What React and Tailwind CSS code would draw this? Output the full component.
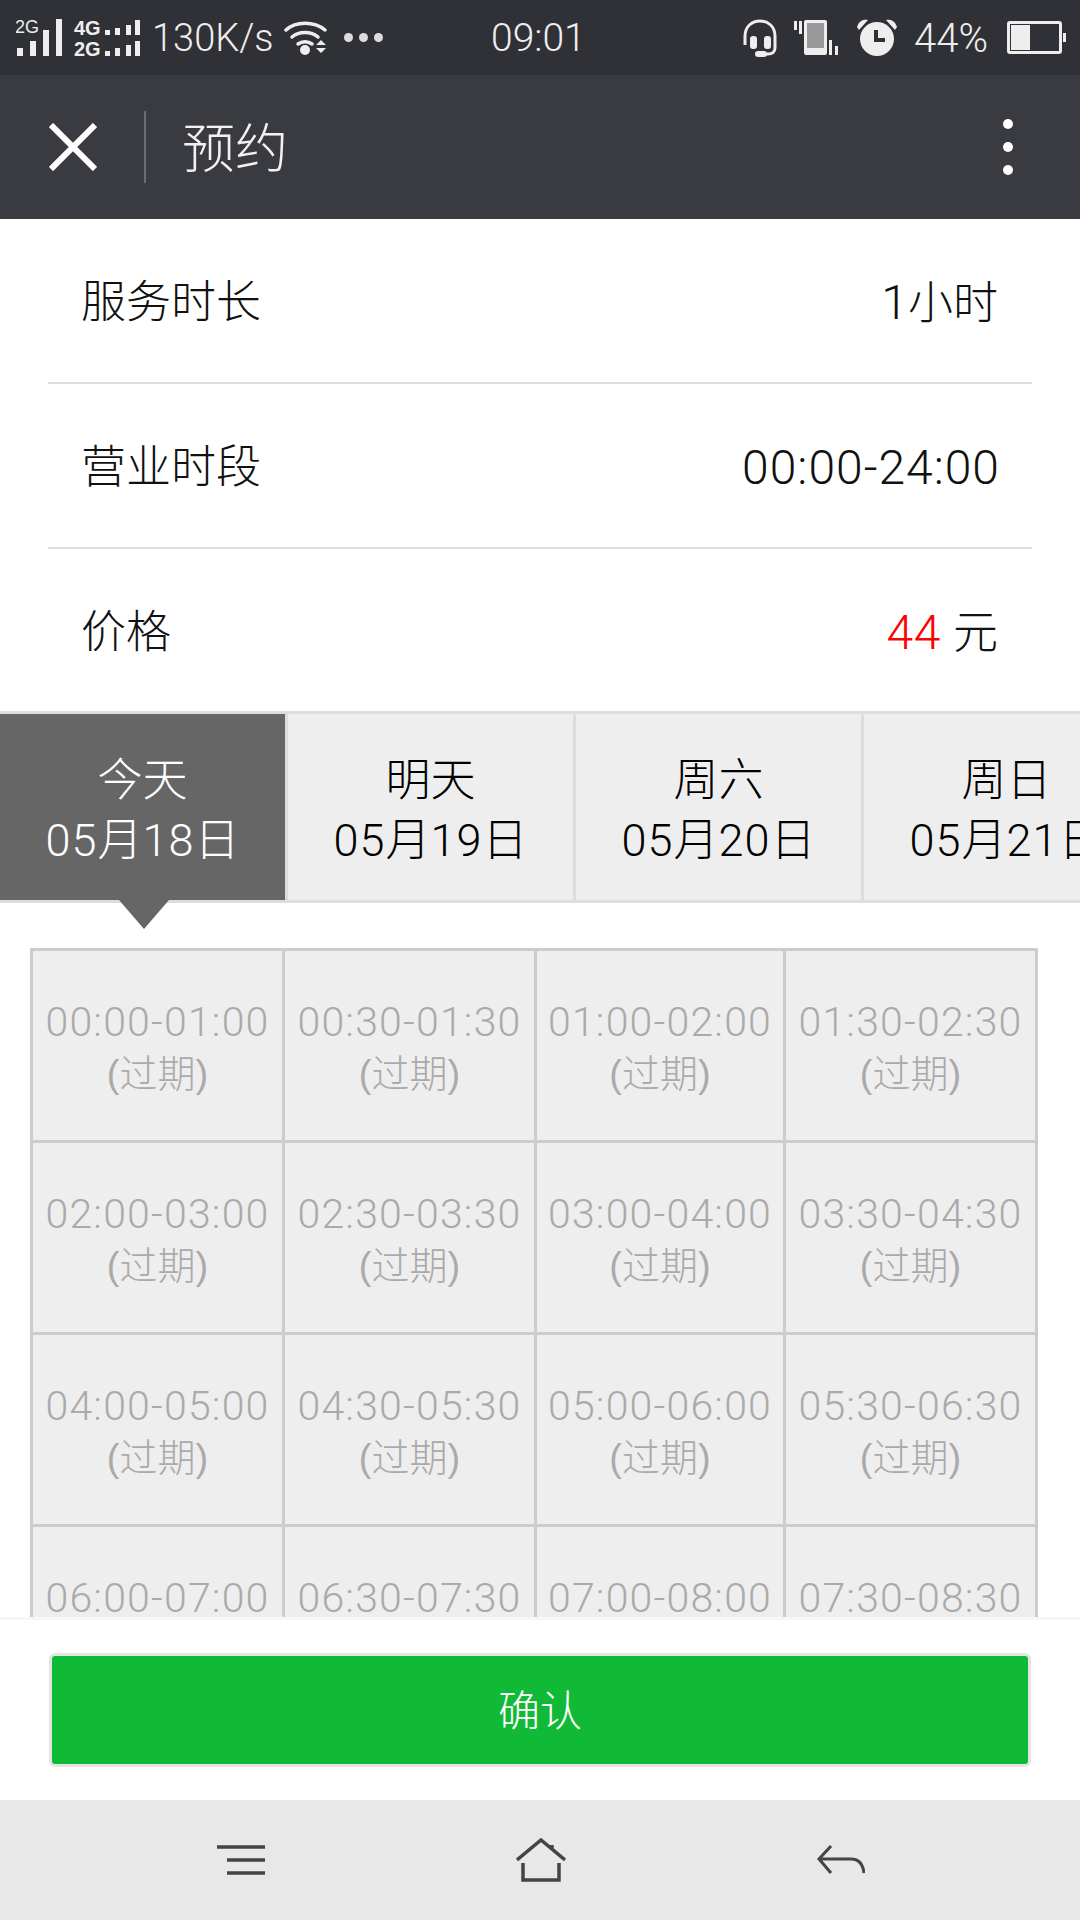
const LATIN = "font-['Liberation_Sans','Noto_Sans_CJK_SC',sans-serif]";
const DIGITS = "font-['Roboto','Noto_Sans_CJK_SC',sans-serif] font-light";

const tabs = [
  { day: '今天', date: '18', active: true },
  { day: '明天', date: '19' },
  { day: '周六', date: '20' },
  { day: '周日', date: '21' },
];

const slots = [
  '00:00-01:00', '00:30-01:30', '01:00-02:00', '01:30-02:30',
  '02:00-03:00', '02:30-03:30', '03:00-04:00', '03:30-04:30',
  '04:00-05:00', '04:30-05:30', '05:00-06:00', '05:30-06:30',
  '06:00-07:00', '06:30-07:30', '07:00-08:00', '07:30-08:30',
];

function SignalIcons() {
  return (
    <svg width="126" height="40" viewBox="16 18 126 40" className="shrink-0">
      <text x="15" y="33" fontSize="18" fill="#eee" fontFamily="Liberation Sans">2G</text>
      <g fill="#eee">
        <rect x="17" y="48" width="6" height="8" />
        <rect x="30" y="41" width="6" height="15" />
        <rect x="43" y="30" width="6" height="26" />
        <rect x="56" y="19" width="6" height="37" />
      </g>
      <text x="74" y="35" fontSize="20" fontWeight="700" fill="#eee" fontFamily="Liberation Sans">4G</text>
      <text x="74" y="56" fontSize="20" fontWeight="700" fill="#eee" fontFamily="Liberation Sans">2G</text>
      <g fill="#eee">
        <rect x="105" y="30" width="5" height="5" />
        <rect x="115" y="28" width="5" height="7" />
        <rect x="126" y="25" width="5" height="10" />
        <rect x="135" y="20" width="5" height="15" />
        <rect x="105" y="51" width="5" height="5" />
        <rect x="115" y="48" width="5" height="8" />
        <rect x="126" y="45" width="5" height="11" />
        <rect x="135" y="41" width="5" height="15" />
      </g>
    </svg>
  );
}

function WifiIcon() {
  return (
    <svg width="44" height="34" viewBox="0 0 44 34" className="shrink-0">
      <g fill="none" stroke="#eee" strokeWidth="3.5" strokeLinecap="round">
        <path d="M2 9 C12 0 30 0 41 9" />
        <path d="M8 16 C15 10 27 10 34 16" />
        <path d="M14 23 C18 20 24 20 28 23" />
      </g>
      <circle cx="21" cy="29" r="5" fill="#eee" />
      <path d="M32 24 L37 19 L42 24 Z M32 27 L42 27 L37 32 Z" fill="#eee" />
    </svg>
  );
}

function HeadsetIcon() {
  return (
    <svg width="34" height="38" viewBox="0 0 34 38" className="shrink-0">
      <path d="M2 26 V17 C2 -3 32 -3 32 17 V29 C32 33 29 35 25 35 H14" fill="none" stroke="#eee" strokeWidth="3" />
      <rect x="7" y="17" width="7" height="13" rx="3" fill="#eee" />
      <rect x="21" y="17" width="7" height="13" rx="3" fill="#eee" />
      <rect x="12" y="32" width="12" height="6" rx="3" fill="#eee" />
    </svg>
  );
}

function VibrateIcon() {
  return (
    <svg width="44" height="36" viewBox="0 0 44 36" className="shrink-0">
      <rect x="0" y="1" width="3" height="9" fill="#eee" />
      <rect x="5" y="1" width="3" height="13" fill="#eee" />
      <rect x="10" y="0" width="23" height="35" rx="2" fill="#eee" />
      <rect x="13" y="3" width="17" height="25" fill="#999" />
      <rect x="35" y="20" width="3" height="15" fill="#eee" />
      <rect x="41" y="26" width="3" height="9" fill="#eee" />
    </svg>
  );
}

function AlarmIcon() {
  return (
    <svg width="40" height="37" viewBox="0 0 40 37" className="shrink-0">
      <circle cx="20" cy="20" r="17" fill="#eee" />
      <path d="M0 8 C2 1 8 0 11 1 L2 11 Z M40 8 C38 1 32 0 29 1 L38 11 Z" fill="#eee" />
      <path d="M19 11 V21 H28" fill="none" stroke="#303136" strokeWidth="4" />
    </svg>
  );
}

function BatteryIcon() {
  return (
    <div className="flex items-center shrink-0">
      <div className="w-[55px] h-[33px] border-[3px] border-[#eee] rounded-[3px] p-[1px]">
        <div className="w-[19px] h-full bg-[#eee]" />
      </div>
      <div className="w-[3px] h-[9px] ml-[1px] bg-[#eee]" />
    </div>
  );
}

function StatusBar() {
  return (
    <div className="flex items-center h-[75px] pl-[16px] bg-[#303136] text-[#eee]">
      <SignalIcons />
      <span className={`ml-[10px] w-[132px] text-[38px] pt-[2px] ${DIGITS}`}>130K/s</span>
      <WifiIcon />
      <div className="flex gap-[6px] ml-[16px]">
        <span className="w-[9px] h-[9px] rounded-full bg-[#ddd]" />
        <span className="w-[9px] h-[9px] rounded-full bg-[#ddd]" />
        <span className="w-[9px] h-[9px] rounded-full bg-[#ddd]" />
      </div>
      <span className={`ml-[108px] w-[93px] text-[39px] pt-[2px] whitespace-nowrap ${DIGITS}`}>09:01</span>
      <div className="ml-[159px]"><HeadsetIcon /></div>
      <div className="ml-[17px]"><VibrateIcon /></div>
      <div className="ml-[19px]"><AlarmIcon /></div>
      <span className={`ml-[17px] w-[76px] text-[40px] pt-[2px] ${DIGITS}`}>44%</span>
      <div className="ml-[17px]"><BatteryIcon /></div>
    </div>
  );
}

function NavBar() {
  return (
    <div className={`flex items-center h-[144px] bg-[#3a3b40] text-[#f2f2f2] ${LATIN}`}>
      <svg width="48" height="48" viewBox="0 0 48 48" className="ml-[49px] shrink-0">
        <path d="M2 2 L46 46 M46 2 L2 46" stroke="#fff" strokeWidth="6" />
      </svg>
      <div className="ml-[47px] w-[2px] h-[72px] bg-[#6b6c70]" />
      <span className="ml-[36px] pt-[4px] text-[53px] font-light leading-none">预约</span>
      <div className="ml-auto mr-[67px] flex flex-col gap-[13px]">
        <span className="w-[10px] h-[10px] rounded-full bg-white" />
        <span className="w-[10px] h-[10px] rounded-full bg-white" />
        <span className="w-[10px] h-[10px] rounded-full bg-white" />
      </div>
    </div>
  );
}

function InfoRow({ label, children, divider = true, height = 'h-[165px]' }) {
  return (
    <div className={`mx-[48px] pl-[33px] pr-[34px] pt-[5px] flex items-center justify-between ${height} ${divider ? 'border-b-2 border-[#ddd]' : ''}`}>
      <span className="text-[45px] font-light text-[#111]">{label}</span>
      <span className="text-[#111] font-light flex items-baseline">{children}</span>
    </div>
  );
}

function DateTabs() {
  return (
    <div className="flex overflow-hidden h-[192px] border-y-[3px] border-[#ddd] bg-[#eee]">
      {tabs.map(tab => (
        <div
          key={tab.date}
          className={`w-[288px] shrink-0 flex flex-col items-center justify-center border-r-[3px] border-[#ddd] text-[45px] font-light leading-[60px] whitespace-nowrap pt-[8px] ${tab.active ? 'bg-[#666] text-white' : 'text-black'}`}
        >
          <span>{tab.day}</span>
          <span className="flex items-baseline">
            <span className={`text-[45px] tracking-[1px] ${DIGITS}`}>05</span>
            月
            <span className={`text-[45px] tracking-[1px] ${DIGITS}`}>{tab.date}</span>
            日
          </span>
        </div>
      ))}
    </div>
  );
}

function SlotGrid() {
  return (
    <div className="grid grid-cols-[252px_252px_249px_252px] w-[1008px] ml-[30px] border-l-[3px] border-t-[3px] border-[#ccc] bg-[#eee]">
      {slots.map(slot => (
        <div
          key={slot}
          className="h-[192px] pt-[4px] flex flex-col items-center justify-center border-r-[3px] border-b-[3px] border-[#ccc] text-[#aaa] leading-[52px]"
        >
          <span className={`text-[41px] tracking-[1.2px] whitespace-nowrap ${DIGITS}`}>{slot}</span>
          <span className="text-[38px] font-light">(过期)</span>
        </div>
      ))}
    </div>
  );
}

function Footer() {
  return (
    <div className="h-[183px] shrink-0 flex items-center justify-center bg-white border-t-[3px] border-[#f7f7f7]">
      <button className="w-[982px] h-[114px] pt-[2px] rounded-[6px] border-[3px] border-[#e5e5e5] bg-[#11ba36] text-white text-[42px] font-light">
        确认
      </button>
    </div>
  );
}

function SystemNav() {
  return (
    <div className="h-[120px] shrink-0 bg-[#e8e8e8] flex items-center">
      <svg width="48" height="30" viewBox="0 0 48 30" className="ml-[217px] shrink-0">
        <path d="M0 2 H48 M10 15 H48 M10 28 H48" stroke="#444" strokeWidth="3.5" />
      </svg>
      <svg width="50" height="44" viewBox="0 0 50 44" className="ml-[251px] shrink-0">
        <path d="M1 22 L25 2 L49 22 M36 7 L36 12 M7 25 V42 H43 V25" fill="none" stroke="#444" strokeWidth="3.5" />
      </svg>
      <svg width="48" height="30" viewBox="0 0 48 30" className="ml-[251px] shrink-0">
        <path d="M14 1 L2 14 L14 28 M2 14 H34 C42 14 46 20 47 28" fill="none" stroke="#444" strokeWidth="3" />
      </svg>
    </div>
  );
}

export default function App() {
  return (
    <div className={`w-[1080px] h-[1920px] flex flex-col overflow-hidden bg-white ${LATIN}`}>
      <StatusBar />
      <NavBar />
      <div className="flex-1 min-h-0 overflow-hidden">
        <InfoRow label="服务时长">
          <span className={`text-[48px] ${DIGITS}`}>1</span>
          <span className="text-[45px]">小时</span>
        </InfoRow>
        <InfoRow label="营业时段">
          <span className={`text-[48px] tracking-[1px] -mr-[2px] ${DIGITS}`}>00:00-24:00</span>
        </InfoRow>
        <InfoRow label="价格" divider={false} height="h-[162px]">
          <span className={`text-[48px] tracking-[0.6px] text-[#ff0000] ${DIGITS}`}>44</span>
          <span className="text-[45px] ml-[12px]">元</span>
        </InfoRow>
        <DateTabs />
        <div className="relative h-[45px]">
          <svg width="50" height="29" viewBox="0 0 50 29" className="absolute left-[119px] -top-[3px]">
            <path d="M0 0 H50 L25 29 Z" fill="#666" />
          </svg>
        </div>
        <SlotGrid />
      </div>
      <Footer />
      <SystemNav />
    </div>
  );
}
